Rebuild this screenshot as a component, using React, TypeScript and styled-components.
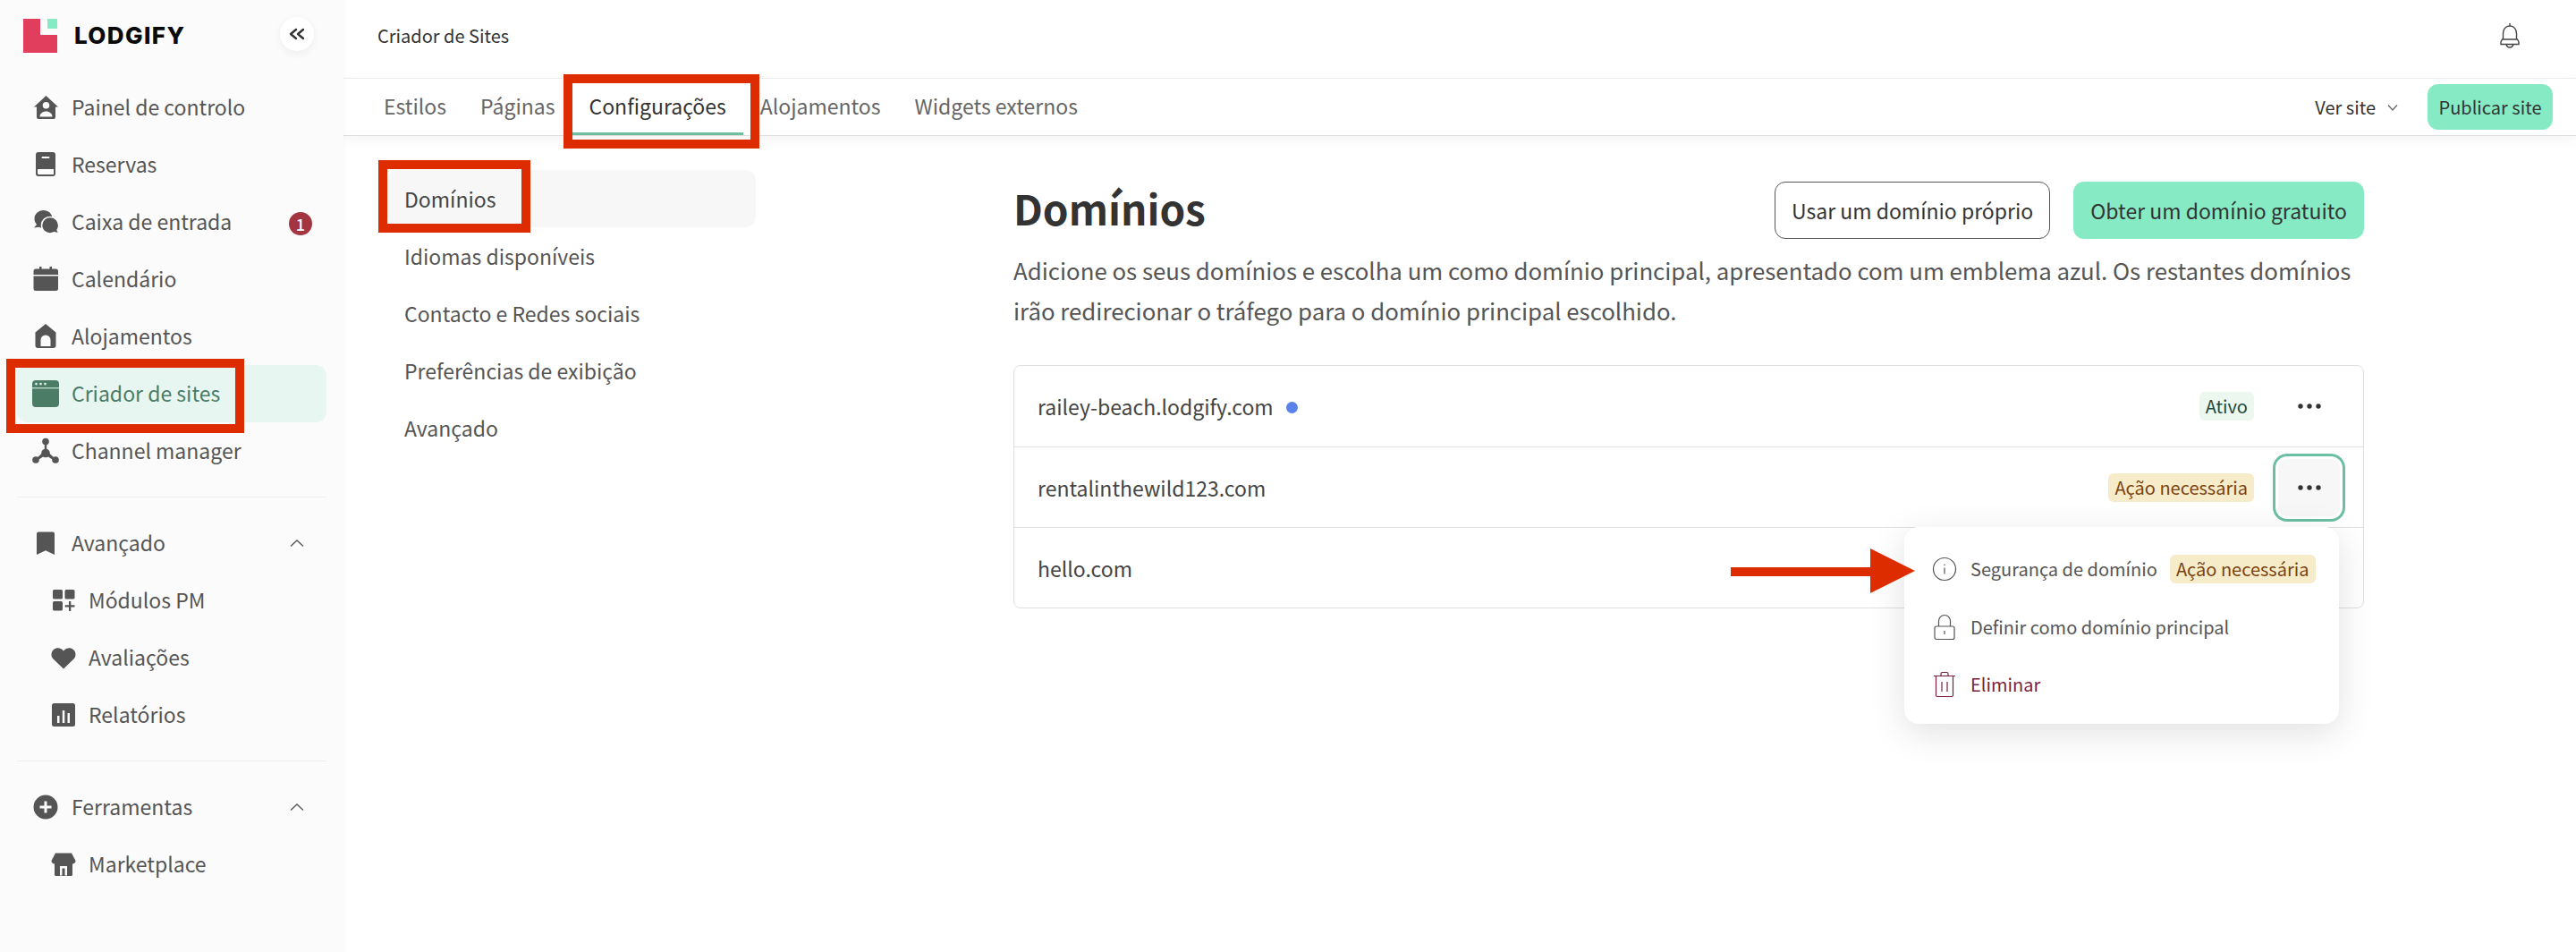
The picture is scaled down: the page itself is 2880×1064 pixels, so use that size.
import React from "react";
import styled, { createGlobalStyle } from "styled-components";

const Global = createGlobalStyle`
  html, body { margin: 0; padding: 0; background: #fff; }
  body { font-family: "Noto Sans CJK SC", "Noto Sans", sans-serif; color: #555; overflow: hidden; }
  * { box-sizing: border-box; }
`;

const Page = styled.div`
  position: relative;
  display: flex;
  width: 2880px;
  height: 1064px;
  overflow: hidden;
  background: #fff;
`;

/* ---------- Sidebar ---------- */
const Sidebar = styled.aside`
  flex: 0 0 384px;
  height: 100%;
  padding: 0 19px;
  background: #fbfbfb;
  box-shadow: 0 0 6px rgba(0, 0, 0, 0.04);
  position: relative;
  z-index: 3;
`;
const Brand = styled.div`
  height: 88px;
  display: flex;
  align-items: center;
  padding: 0 14px 8px 7px;
`;
const LogoMark = styled.svg`
  width: 38px;
  height: 38px;
  flex: none;
`;
const Wordmark = styled.span`
  margin-left: 19px;
  font-family: Inter, "Liberation Sans", sans-serif;
  font-weight: 800;
  font-size: 26px;
  letter-spacing: 1.4px;
  line-height: 30px;
  color: #0a0a0a;
`;
const Collapse = styled.button`
  margin: -4px 0 0 auto;
  width: 38px;
  height: 38px;
  padding: 0;
  border: 0;
  border-radius: 50%;
  background: #fff;
  box-shadow: 0 3px 10px rgba(0, 0, 0, 0.06);
  display: flex;
  align-items: center;
  justify-content: center;
  color: #333;
`;
const NavRow = styled.div<{ $active?: boolean; $sub?: boolean }>`
  height: 64px;
  display: flex;
  align-items: center;
  padding-left: ${(p) => (p.$sub ? "37px" : "17px")};
  padding-right: 19px;
  border-radius: 12px;
  font-size: 23px;
  line-height: 30px;
  background: ${(p) => (p.$active ? "#e8f6f2" : "transparent")};
  color: ${(p) => (p.$active ? "#4a7c66" : "#555")};
`;
const NavLabel = styled.span`
  margin-top: -2px;
`;
const NavIcon = styled.svg<{ $sub?: boolean }>`
  width: 30px;
  height: 30px;
  flex: none;
  margin-right: ${(p) => (p.$sub ? "13px" : "14px")};
  fill: currentColor;
`;
const Count = styled.span`
  margin: 3px -3px 0 auto;
  width: 26px;
  height: 26px;
  border-radius: 50%;
  background: #a4343f;
  color: #fff;
  font-size: 18px;
  font-weight: 500;
  line-height: 26px;
  text-align: center;
`;
const Caret = styled.svg`
  margin-left: auto;
  width: 18px;
  height: 18px;
  margin-right: 5px;
  fill: none;
  stroke: #555;
  stroke-width: 1.3;
`;
const SideRule = styled.hr`
  margin: 19px 0 19px;
  border: 0;
  border-top: 1px solid #eee;
`;

/* ---------- Main ---------- */
const Main = styled.main`
  flex: 1;
  min-width: 0;
  display: flex;
  flex-direction: column;
`;
const TopBar = styled.header`
  height: 88px;
  flex: none;
  display: flex;
  align-items: center;
  justify-content: space-between;
  padding: 0 62px 8px 38px;
  border-bottom: 1px solid #eee;
  font-size: 20px;
  line-height: 26px;
  color: #333;
`;
const Bell = styled.svg`
  width: 24px;
  height: 28px;
  margin-top: 1px;
  fill: none;
  stroke: #444;
  stroke-width: 1.4;
`;
const TabBar = styled.nav`
  height: 64px;
  flex: none;
  display: flex;
  align-items: stretch;
  padding: 0 26px;
  border-bottom: 1px solid #ddd;
  box-shadow: 0 4px 14px rgba(0, 0, 0, 0.05);
  position: relative;
`;
const Tab = styled.a<{ $active?: boolean }>`
  display: flex;
  align-items: center;
  padding: 0 19px 1px;
  font-size: 23px;
  line-height: 30px;
  color: ${(p) => (p.$active ? "#333" : "#666")};
  border-bottom: 3px solid ${(p) => (p.$active ? "#6dbf9f" : "transparent")};
`;
const TabActions = styled.div`
  margin-left: auto;
  display: flex;
  align-items: center;
`;
const ViewSite = styled.span`
  font-size: 20px;
  line-height: 26px;
  color: #333;
  display: flex;
  align-items: center;
`;
const SmallCaret = styled.svg`
  width: 14px;
  height: 14px;
  margin: 0 32px 0 12px;
  fill: none;
  stroke: #666;
  stroke-width: 1.2;
`;
const Publish = styled.button`
  width: 140px;
  height: 51px;
  padding: 0;
  border: 0;
  border-radius: 12px;
  background: #86ebc4;
  font: inherit;
  font-size: 20px;
  line-height: 26px;
  color: #333;
`;
const Body = styled.div`
  flex: 1;
  display: flex;
  align-items: flex-start;
  padding: 38px 0 0 49px;
`;
const SubNav = styled.div`
  flex: 0 0 412px;
`;
const SubItem = styled.div<{ $active?: boolean }>`
  height: 64px;
  display: flex;
  align-items: center;
  padding: 0 0 1px 19px;
  border-radius: 12px;
  font-size: 23px;
  line-height: 30px;
  background: ${(p) => (p.$active ? "#f7f7f7" : "transparent")};
  color: ${(p) => (p.$active ? "#444" : "#555")};
`;
const Content = styled.section`
  flex: 0 0 1510px;
  min-width: 0;
  margin-left: 288px;
  padding-top: 13px;
`;
const TitleRow = styled.div`
  display: flex;
  align-items: center;
  justify-content: space-between;
  height: 64px;
`;
const Title = styled.h1`
  margin: 0 0 6px;
  font-size: 46px;
  line-height: 60px;
  font-weight: 700;
  color: #333;
`;
const Buttons = styled.div`
  display: flex;
  gap: 26px;
`;
const Btn = styled.button<{ $primary?: boolean }>`
  height: 64px;
  padding: 0 ${(p) => (p.$primary ? "19px" : "18px")};
  border-radius: 12px;
  font: inherit;
  font-size: 23px;
  line-height: 30px;
  color: #333;
  background: ${(p) => (p.$primary ? "#86ebc4" : "#fff")};
  border: ${(p) => (p.$primary ? "0" : "1.5px solid #555")};
`;
const Desc = styled.p`
  margin: 12px 0 0;
  font-size: 25.800px;
  line-height: 45px;
  color: #555;
  white-space: nowrap;
`;
const Table = styled.div`
  position: relative;
  margin-top: 39px;
  border: 1px solid #e0e0e0;
  border-radius: 8px;
`;
const Row = styled.div`
  height: 90px;
  display: flex;
  align-items: center;
  padding: 0 20px 0 26px;
  font-size: 23px;
  line-height: 30px;
  color: #444;
  & + & {
    border-top: 1px solid #e0e0e0;
  }
`;
const Dot = styled.span`
  width: 13px;
  height: 13px;
  margin: 2px 0 0 14px;
  border-radius: 50%;
  background: #5b82ea;
`;
const Badge = styled.span<{ $tone: "ok" | "warn" }>`
  margin-left: auto;
  padding: 0 7px;
  height: 32px;
  border-radius: 6px;
  font-size: 20px;
  line-height: 31px;
  background: ${(p) => (p.$tone === "ok" ? "#ecf7ef" : "#f7ecc9")};
  color: ${(p) => (p.$tone === "ok" ? "#1e4a3e" : "#7a4310")};
`;
const MoreBtn = styled.div<{ $focus?: boolean }>`
  width: 81px;
  height: 76px;
  margin-left: 21px;
  display: flex;
  align-items: center;
  justify-content: center;
  border-radius: 16px;
  color: #333;
  background: ${(p) => (p.$focus ? "#f7f7f7" : "transparent")};
  border: ${(p) => (p.$focus ? "3px solid #6bbfa3" : "0")};
  box-shadow: ${(p) => (p.$focus ? "inset 0 0 0 3px #fff" : "none")};
`;
const Menu = styled.div`
  position: absolute;
  top: 180px;
  right: 27px;
  width: 486px;
  height: 220px;
  padding: 15px 0 0 31px;
  background: #fff;
  border-radius: 16px;
  box-shadow: 0 10px 40px rgba(0, 0, 0, 0.12);
  z-index: 2;
`;
const MenuItem = styled.div<{ $danger?: boolean }>`
  height: 64.500px;
  display: flex;
  align-items: center;
  font-size: 20px;
  line-height: 26px;
  color: ${(p) => (p.$danger ? "#7a1f3d" : "#555")};
`;
const MenuIcon = styled.svg`
  width: 28px;
  height: 30px;
  margin-right: 15px;
  flex: none;
  fill: none;
  stroke: currentColor;
  stroke-width: 1.2;
`;
const MenuBadge = styled(Badge)`
  margin-left: 14px;
`;

/* ---------- Annotations that lie over the page ---------- */
const Mark = styled.div<{ $x: number; $y: number; $w: number; $h: number }>`
  position: absolute;
  left: ${(p) => p.$x}px;
  top: ${(p) => p.$y}px;
  width: ${(p) => p.$w}px;
  height: ${(p) => p.$h}px;
  border: 10px solid #dd2c00;
  z-index: 5;
`;
const Arrow = styled.svg`
  position: absolute;
  left: 1935px;
  top: 613px;
  width: 206px;
  height: 50px;
  fill: #dd2c00;
  z-index: 5;
`;

/* ---------- Icons ---------- */
const I: Record<string, React.ReactNode> = {
  dash: (
    <path fillRule="evenodd" d="M15.500 2 29 14.500h-3V26a2 2 0 0 1-2 2H7a2 2 0 0 1-2-2V14.500H2L15.500 2Zm0 7a3.800 3.800 0 1 0 0 7.600 3.800 3.800 0 0 0 0-7.600ZM8.500 25.500h14c0-3.500-3.200-6-7-6s-7 2.500-7 6Z" />
  ),
  book: (
    <path fillRule="evenodd" d="M7 1h16a3 3 0 0 1 3 3v21a3 3 0 0 1-3 3H7a3 3 0 0 1-3-3V4a3 3 0 0 1 3-3Zm4.500 5a1 1 0 0 0 0 2h7a1 1 0 0 0 0-2h-7ZM7 20a1 1 0 0 0-1 1v3.500A1.500 1.500 0 0 0 7.500 26H24v-6H7Z" />
  ),
  chat: (
    <>
      <path d="M12.500 2C7 2 2.500 6.300 2.500 11.500c0 2.500 1 4.700 2.600 6.400L2 21.500l5.800-.8c1.400.8 3 1.200 4.700 1.200 5.500 0 10-4.600 10-10.400S18 2 12.500 2Z" />
      <path stroke="#fbfbfb" strokeWidth="1.600" d="M20 9.500c-5.200 0-9.500 4-9.500 9.200S14.800 28 20 28c1.700 0 3.300-.4 4.700-1.200l5.300 1.200-1.800-4c1-1.500 1.500-3.300 1.500-5.300 0-5.200-4.500-9.200-9.700-9.200Z" />
    </>
  ),
  cal: (
    <path d="M8 1h2.500v2.500h9V1H22v2.500h4.500A2.500 2.500 0 0 1 29 6v4H1.500V6A2.500 2.500 0 0 1 4 3.500h4V1ZM1.500 11.500H29V25.500a2.500 2.500 0 0 1-2.500 2.500H4a2.500 2.500 0 0 1-2.500-2.500V11.500Z" />
  ),
  home: (
    <path fillRule="evenodd" d="M15 1 26.500 10.500V25a3 3 0 0 1-3 3h-17a3 3 0 0 1-3-3V10.500L15 1ZM9.500 26h11v-7a5.500 5.500 0 0 0-11 0v7Z" />
  ),
  site: (
    <path fillRule="evenodd" d="M4 0h22a4 4 0 0 1 4 4v22a4 4 0 0 1-4 4H4a4 4 0 0 1-4-4V4a4 4 0 0 1 4-4ZM0 8.200v1h30v-1H0ZM4.500 2.800a1.300 1.300 0 1 0 0 2.600 1.300 1.300 0 0 0 0-2.600Zm5 0a1.300 1.300 0 1 0 0 2.600 1.300 1.300 0 0 0 0-2.600Zm5 0a1.300 1.300 0 1 0 0 2.600 1.300 1.300 0 0 0 0-2.600Z" />
  ),
  net: (
    <>
      <circle cx="15" cy="4.500" r="3.800" />
      <circle cx="4" cy="25" r="3.800" />
      <circle cx="26" cy="25" r="3.800" />
      <path d="M13.800 7h2.400v8l10 9-1.600 2L15 19.500l-9.600 6.500-1.600-2 10-9V7Z" />
      <circle cx="15" cy="17.500" r="4.800" />
    </>
  ),
  mark: <path d="M7 2.500h16a2 2 0 0 1 2 2V28l-10-4.800L5 28V4.500a2 2 0 0 1 2-2Z" />,
  mods: (
    <>
      <rect x="3" y="3" width="11" height="10.500" rx="1.500" />
      <rect x="16.500" y="3" width="11" height="10.500" rx="1.500" />
      <rect x="3" y="16" width="11" height="10.500" rx="1.500" />
      <path d="M21 16h2.300v4.300h4.200v2.300h-4.200v4.400H21v-4.400h-4.300v-2.300H21V16Z" />
    </>
  ),
  heart: (
    <path d="M15 27.500 3.500 16.500C.5 13.500 1 8.600 4 6c3.200-2.700 8-2.200 11 1.500C18 3.800 22.800 3.300 26 6c3 2.600 3.500 7.500.5 10.500L15 27.500Z" />
  ),
  chart: (
    <path fillRule="evenodd" d="M4.500 2h21A2.500 2.500 0 0 1 28 4.500v21a2.500 2.500 0 0 1-2.500 2.500h-21A2.500 2.500 0 0 1 2 25.500v-21A2.500 2.500 0 0 1 4.500 2ZM8 16v8h2.500v-8H8Zm5.800-6v14h2.500V10h-2.500ZM19.500 13v11H22V13h-2.500Z" />
  ),
  plus: (
    <path fillRule="evenodd" d="M15 1.500a13.500 13.500 0 1 1 0 27 13.500 13.500 0 0 1 0-27Zm-1.500 7v5h-5v3h5v5h3v-5h5v-3h-5v-5h-3Z" />
  ),
  store: (
    <path fillRule="evenodd" d="M6 2.500h18l4.500 8.500c0 2-1.600 3.500-3.500 3.500v12a1.500 1.500 0 0 1-1.500 1.500h-17A1.500 1.500 0 0 1 5 26.500v-12c-1.900 0-3.500-1.500-3.500-3.500L6 2.500ZM11 17v10.500h2.500V19.500h3v8H19V17h-8Z" />
  ),
};

const Up = () => (
  <Caret viewBox="0 0 18 18">
    <path d="M2 12.500 9 6l7 6.500" />
  </Caret>
);
const Dots = () => (
  <svg width="26" height="6" viewBox="0 0 26 6" fill="currentColor">
    <circle cx="3" cy="3" r="2.700" />
    <circle cx="13" cy="3" r="2.700" />
    <circle cx="23" cy="3" r="2.700" />
  </svg>
);

const top = [
  ["dash", "Painel de controlo"],
  ["book", "Reservas"],
  ["chat", "Caixa de entrada"],
  ["cal", "Calendário"],
  ["home", "Alojamentos"],
  ["site", "Criador de sites"],
  ["net", "Channel manager"],
];

export default function App() {
  return (
    <Page>
      <Global />
      <Sidebar>
        <Brand>
          <LogoMark viewBox="0 0 38 38">
            <path d="M0 0h19v18h19v20H0Z" fill="#e03e5c" />
            <path d="M27 0h11v11H27Z" fill="#86ebc4" />
          </LogoMark>
          <Wordmark>LODGIFY</Wordmark>
          <Collapse aria-label="Recolher">
            <svg width="18" height="14" viewBox="0 0 18 14" fill="none" stroke="currentColor" strokeWidth="2.400" strokeLinecap="round" strokeLinejoin="round">
              <path d="M8 2 2 7l6 5M16 2l-6 5 6 5" />
            </svg>
          </Collapse>
        </Brand>
        {top.map(([ic, label]) => (
          <NavRow key={label} $active={ic === "site"}>
            <NavIcon viewBox="0 0 30 30">{I[ic]}</NavIcon>
            <NavLabel>{label}</NavLabel>
            {ic === "chat" && <Count>1</Count>}
          </NavRow>
        ))}
        <SideRule />
        <NavRow>
          <NavIcon viewBox="0 0 30 30">{I.mark}</NavIcon>
          <NavLabel>Avançado</NavLabel>
          <Up />
        </NavRow>
        <NavRow $sub>
          <NavIcon $sub viewBox="0 0 30 30">{I.mods}</NavIcon>
          <NavLabel>Módulos PM</NavLabel>
        </NavRow>
        <NavRow $sub>
          <NavIcon $sub viewBox="0 0 30 30">{I.heart}</NavIcon>
          <NavLabel>Avaliações</NavLabel>
        </NavRow>
        <NavRow $sub>
          <NavIcon $sub viewBox="0 0 30 30">{I.chart}</NavIcon>
          <NavLabel>Relatórios</NavLabel>
        </NavRow>
        <SideRule />
        <NavRow>
          <NavIcon viewBox="0 0 30 30">{I.plus}</NavIcon>
          <NavLabel>Ferramentas</NavLabel>
          <Up />
        </NavRow>
        <NavRow $sub>
          <NavIcon $sub viewBox="0 0 30 30">{I.store}</NavIcon>
          <NavLabel>Marketplace</NavLabel>
        </NavRow>
      </Sidebar>

      <Main>
        <TopBar>
          <span>Criador de Sites</span>
          <Bell viewBox="0 0 24 28">
            <path d="M12 0v3M12 3c-5 0-7.500 4-7.500 8.500V18h15v-6.500C19.500 7 17 3 12 3ZM3.500 18h17l1.500 3v2.500H2V21l1.500-3ZM8 23.500c.5 2 2.500 3.500 4 3.500s3.500-1.500 4-3.500" />
          </Bell>
        </TopBar>
        <TabBar>
          <Tab>Estilos</Tab>
          <Tab>Páginas</Tab>
          <Tab $active>Configurações</Tab>
          <Tab>Alojamentos</Tab>
          <Tab>Widgets externos</Tab>
          <TabActions>
            <ViewSite>
              Ver site
              <SmallCaret viewBox="0 0 14 14">
                <path d="M2 4.500 7 10l5-5.500" />
              </SmallCaret>
            </ViewSite>
            <Publish>Publicar site</Publish>
          </TabActions>
        </TabBar>
        <Body>
          <SubNav>
            <SubItem $active>Domínios</SubItem>
            <SubItem>Idiomas disponíveis</SubItem>
            <SubItem>Contacto e Redes sociais</SubItem>
            <SubItem>Preferências de exibição</SubItem>
            <SubItem>Avançado</SubItem>
          </SubNav>
          <Content>
            <TitleRow>
              <Title>Domínios</Title>
              <Buttons>
                <Btn>Usar um domínio próprio</Btn>
                <Btn $primary>Obter um domínio gratuito</Btn>
              </Buttons>
            </TitleRow>
            <Desc>
              Adicione os seus domínios e escolha um como domínio principal, apresentado com um emblema azul. Os restantes domínios
              <br />
              irão redirecionar o tráfego para o domínio principal escolhido.
            </Desc>
            <Table>
              <Row>
                railey-beach.lodgify.com
                <Dot />
                <Badge $tone="ok">Ativo</Badge>
                <MoreBtn><Dots /></MoreBtn>
              </Row>
              <Row>
                rentalinthewild123.com
                <Badge $tone="warn">Ação necessária</Badge>
                <MoreBtn $focus><Dots /></MoreBtn>
              </Row>
              <Row>hello.com</Row>
              <Menu>
                <MenuItem>
                  <MenuIcon viewBox="0 0 28 30">
                    <circle cx="14" cy="15" r="12.500" />
                    <path d="M14 13.500v7M14 9.500v1.500" />
                  </MenuIcon>
                  Segurança de domínio
                  <MenuBadge $tone="warn">Ação necessária</MenuBadge>
                </MenuItem>
                <MenuItem>
                  <MenuIcon viewBox="0 0 28 30">
                    <path d="M5 14h18a2 2 0 0 1 2 2v10.500a2 2 0 0 1-2 2H5a2 2 0 0 1-2-2V16a2 2 0 0 1 2-2ZM7.500 14V8a6.500 6.500 0 0 1 13 0v6M14 19v4" />
                  </MenuIcon>
                  Definir como domínio principal
                </MenuItem>
                <MenuItem $danger>
                  <MenuIcon viewBox="0 0 28 30">
                    <path d="M2 5.500h24M10 5.500V3a1.500 1.500 0 0 1 1.500-1.500h5A1.500 1.500 0 0 1 18 3v2.500M4.500 5.500V27A1.500 1.500 0 0 0 6 28.500h16a1.500 1.500 0 0 0 1.500-1.500V5.500M11 12v11M17 12v11" />
                  </MenuIcon>
                  Eliminar
                </MenuItem>
              </Menu>
            </Table>
          </Content>
        </Body>
      </Main>

      <Mark $x={7} $y={401} $w={266} $h={83} />
      <Mark $x={630} $y={83} $w={219} $h={83} />
      <Mark $x={423} $y={179} $w={170} $h={81} />
      <Arrow viewBox="0 0 206 50">
        <path d="M0 21h156V0l50 25-50 25V31H0Z" />
      </Arrow>
    </Page>
  );
}
